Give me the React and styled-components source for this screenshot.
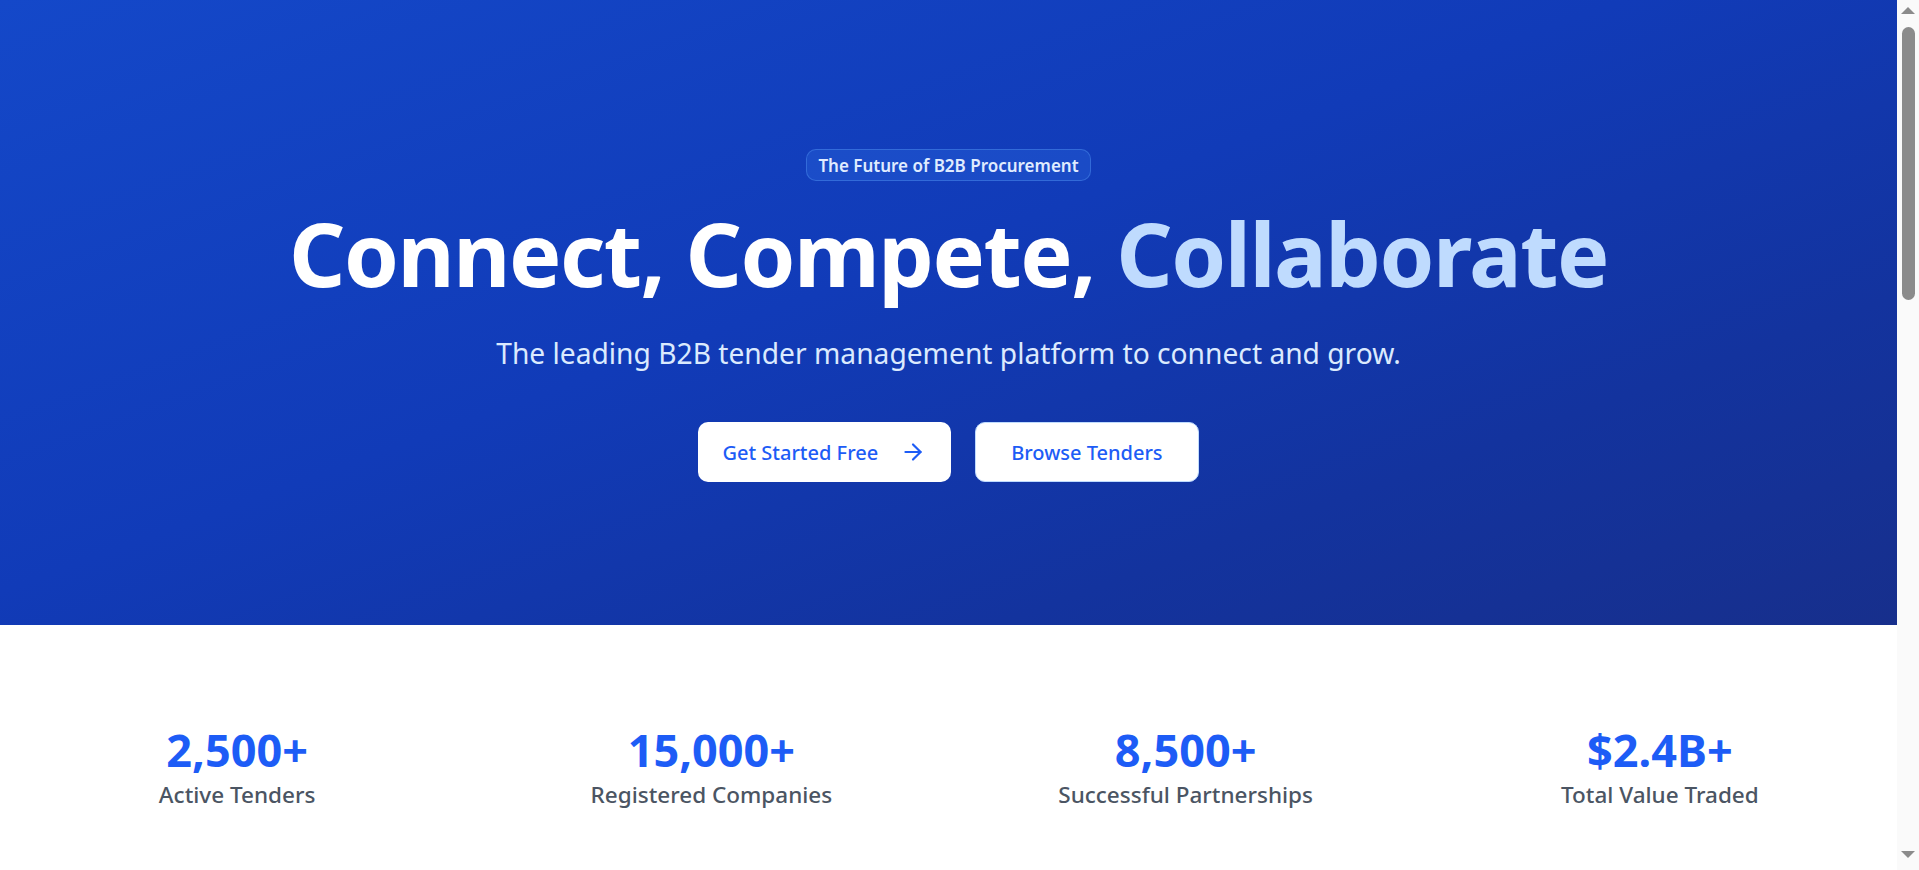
import React from "react";
import styled, { createGlobalStyle } from "styled-components";
import { ArrowRight } from "lucide-react";

const GlobalStyle = createGlobalStyle`
  body {
    margin: 0;
    background: #ffffff;
    font-family: "Noto Sans", "Open Sans", sans-serif;
  }
`;

const Page = styled.div`
  margin-right: 22px;
  min-height: 2640px;
  background: #ffffff;
`;

// browser scrollbar as it shows in the capture
const ScrollTrack = styled.div`
  position: fixed;
  top: 0;
  right: 0;
  width: 22px;
  height: 100vh;
  background: #fafafa;
`;

const ScrollThumb = styled.div`
  position: absolute;
  top: 27px;
  left: 5px;
  width: 13px;
  height: 273px;
  border-radius: 7px;
  background: #8b8b8b;
`;

const ScrollArrow = styled.div`
  position: absolute;
  left: 4px;
  ${(p) => (p.$down ? "bottom: 12px;" : "top: 7px;")}
  width: 0;
  height: 0;
  border-left: 7px solid transparent;
  border-right: 7px solid transparent;
  ${(p) =>
    p.$down ? "border-top: 7px solid #8b8b8b;" : "border-bottom: 7px solid #8b8b8b;"}
`;

const Hero = styled.section`
  height: 625px;
  box-sizing: border-box;
  padding: 149px 20px 0;
  display: flex;
  flex-direction: column;
  align-items: center;
  background: linear-gradient(160deg, #1448c9 0%, #113bb8 45%, #13339e 75%, #172f8c 100%);
`;

const Badge = styled.span`
  display: inline-flex;
  align-items: center;
  height: 32px;
  box-sizing: border-box;
  padding: 0 11px;
  border-radius: 10px;
  border: 1px solid rgba(96, 165, 250, 0.35);
  background: rgba(59, 130, 246, 0.22);
  color: #e0ecff;
  font-size: 17px;
  font-weight: 600;
`;

const Title = styled.h1`
  margin: 23px 0 0;
  font-size: 88px;
  line-height: 99px;
  font-weight: 700;
  letter-spacing: -1.5px;
  color: #ffffff;
  text-align: center;
`;

const Accent = styled.span`
  color: #bfdbfe;
`;

const Subtitle = styled.p`
  margin: 29px 0 0;
  font-size: 28.2px;
  line-height: 42px;
  color: #dbeafe;
  text-align: center;
`;

const Actions = styled.div`
  margin-top: 48px;
  display: flex;
  gap: 24px;
`;

const Button = styled.button`
  height: 60px;
  box-sizing: border-box;
  display: inline-flex;
  align-items: center;
  gap: 22px;
  padding: ${(p) => (p.$outline ? "0 35px" : "0 25px 0 24px")};
  border-radius: 10px;
  border: ${(p) => (p.$outline ? "1.5px solid #bfdbfe" : "none")};
  background: #ffffff;
  color: #1d5cf6;
  font-family: inherit;
  font-size: 20px;
  font-weight: 500;
  cursor: pointer;
`;

const Stats = styled.section`
  padding: 100px 20px;
  display: grid;
  grid-template-columns: repeat(4, 1fr);
  gap: 40px;
  text-align: center;
`;

const Stat = styled.div`
  display: flex;
  flex-direction: column;
  align-items: center;
`;

const StatValue = styled.div`
  font-size: 45px;
  line-height: 50px;
  font-weight: 700;
  color: #1d5cf6;
`;

const StatLabel = styled.div`
  margin-top: 2px;
  font-size: 22.5px;
  line-height: 35px;
  font-weight: 500;
  color: #4b5563;
`;

const stats = [
  { value: "2,500+", label: "Active Tenders" },
  { value: "15,000+", label: "Registered Companies" },
  { value: "8,500+", label: "Successful Partnerships" },
  { value: "$2.4B+", label: "Total Value Traded" }
];

const App = () => (
  <Page>
    <GlobalStyle />
    <Hero>
      <Badge>The Future of B2B Procurement</Badge>
      <Title>
        Connect, Compete, <Accent>Collaborate</Accent>
      </Title>
      <Subtitle>
        The leading B2B tender management platform to connect and grow.
      </Subtitle>
      <Actions>
        <Button>
          Get Started Free
          <ArrowRight size={26} strokeWidth={2} />
        </Button>
        <Button $outline>Browse Tenders</Button>
      </Actions>
    </Hero>
    <Stats>
      {stats.map((s) => (
        <Stat key={s.label}>
          <StatValue>{s.value}</StatValue>
          <StatLabel>{s.label}</StatLabel>
        </Stat>
      ))}
    </Stats>
    <ScrollTrack>
      <ScrollArrow />
      <ScrollThumb />
      <ScrollArrow $down />
    </ScrollTrack>
  </Page>
);

export default App;
